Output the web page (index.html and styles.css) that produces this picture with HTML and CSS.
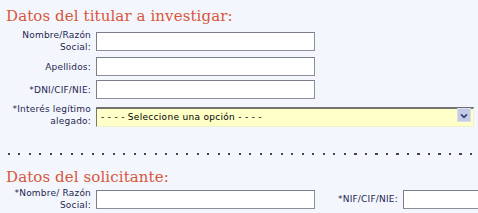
FILE: index.html
```html
<!DOCTYPE html>
<html lang="es">
<head>
  <meta charset="UTF-8">
  <title>Datos del titular</title>
  <link rel="stylesheet" href="styles.css">
</head>
<body>
  <div class="page">
    <h2 class="section-title">Datos del titular a investigar:</h2>

    <div class="form-grid">
      <label class="field-label" for="nombre">Nombre/Razón<br>Social:</label>
      <input class="text-input" type="text" id="nombre">

      <label class="field-label" for="apellidos">Apellidos:</label>
      <input class="text-input" type="text" id="apellidos">

      <label class="field-label" for="dni">*DNI/CIF/NIE:</label>
      <input class="text-input" type="text" id="dni">

      <label class="field-label" for="interes">*Interés legítimo<br>alegado:</label>
      <div class="select-wrap">
        <select class="select-input" id="interes">
          <option>- - - - Seleccione una opción - - - -</option>
        </select>
        <span class="select-arrow">
          <svg width="14" height="14" viewBox="0 0 14 14">
            <path d="M3.5 5 L7 8.5 L10.5 5" fill="none" stroke="#34427a" stroke-width="2"/>
          </svg>
        </span>
      </div>
    </div>

    <div class="divider"></div>

    <h2 class="section-title second">Datos del solicitante:</h2>

    <div class="form-line">
      <label class="field-label" for="sol-nombre">*Nombre/ Razón<br>Social:</label>
      <input class="text-input" type="text" id="sol-nombre">
      <label class="field-label inline" for="nif">*NIF/CIF/NIE:</label>
      <input class="text-input short" type="text" id="nif">
    </div>
  </div>
</body>
</html>
```

FILE: styles.css
```css
body {
  margin: 0;
  background: #f3f7fd;
  font-family: 'DejaVu Sans', Verdana, sans-serif;
  overflow: hidden;
}

.page {
  width: 478px;
  overflow: hidden;
}

.section-title {
  margin: 6px 0 3px 6px;
  font-family: 'DejaVu Serif', 'Liberation Serif', serif;
  font-weight: normal;
  font-size: 15px;
  line-height: 20px;
  color: #d9553a;
  letter-spacing: 0.1px;
}

.section-title.second {
  margin-top: 12px;
  margin-bottom: 0;
}

.form-grid {
  display: grid;
  grid-template-columns: 91px 1fr;
  column-gap: 5px;
  row-gap: 4px;
  align-items: center;
}

.field-label {
  text-align: right;
  font-size: 9px;
  line-height: 12px;
  letter-spacing: 0.2px;
  color: #1f1f4f;
}

.text-input {
  width: 219px;
  height: 19px;
  box-sizing: border-box;
  margin: 0;
  padding: 0 3px;
  background: #fff;
  border: 1px solid #8a8d9a;
  border-top-color: #7a7d8a;
  border-left-color: #7a7d8a;
}

.select-wrap {
  position: relative;
  width: 378px;
  height: 20px;
}

.select-input {
  appearance: none;
  -webkit-appearance: none;
  width: 100%;
  height: 100%;
  box-sizing: border-box;
  margin: 0;
  padding: 0 0 0 4px;
  background: #ffffc8;
  border: 1px solid #f0f0d0;
  border-top: 2px solid #737373;
  border-left: 1px solid #777;
  font-family: 'DejaVu Sans', Verdana, sans-serif;
  font-size: 9px;
  font-weight: normal;
  letter-spacing: 0.3px;
  color: #000;
}

.select-arrow {
  position: absolute;
  right: 3px;
  top: 3px;
  width: 14px;
  height: 14px;
  background: #c4cbe6;
  border: 1px solid #d8def0;
  box-sizing: border-box;
  display: flex;
}

.divider {
  margin: 26px 0 0 8px;
  height: 2px;
  background: repeating-linear-gradient(to right, #444 0 2px, transparent 2px 10.5px);
}

.form-line {
  display: flex;
  align-items: center;
  gap: 5px;
  height: 24px;
  white-space: nowrap;
  overflow: hidden;
}

.form-line > .field-label {
  flex: 0 0 91px;
}

.form-line > .text-input {
  flex: 0 0 219px;
}

.field-label.inline {
  flex: 0 0 auto;
  margin-left: 18px;
}

.form-line > .text-input.short {
  flex: 0 0 76px;
  border-right: none;
}
```
